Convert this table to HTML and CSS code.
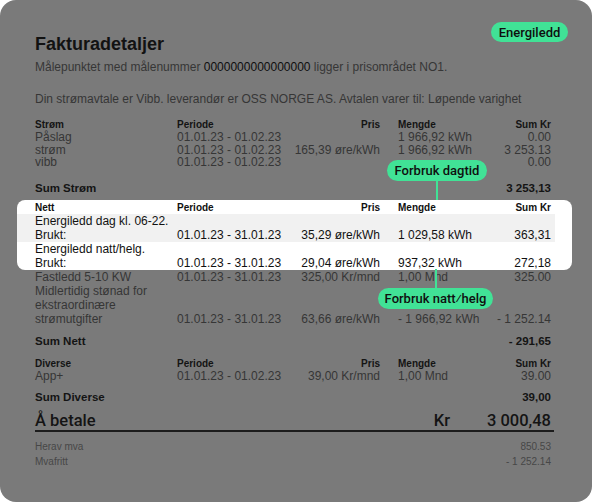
FILE: index.html
```html
<!DOCTYPE html>
<html lang="no">
<head>
<meta charset="utf-8">
<title>Fakturadetaljer</title>
<link rel="stylesheet" href="styles.css">
</head>
<body>
<div class="screen">
  <span class="tag tag-top">Energiledd</span>

  <div class="doc">
    <h1 class="title">Fakturadetaljer</h1>
    <p class="meta">Målepunktet med målenummer <b>0000000000000000</b> ligger i prisområdet NO1.</p>
    <p class="meta agreement">Din strømavtale er Vibb. leverandør er OSS NORGE AS. Avtalen varer til: Løpende varighet</p>

    <section class="group">
      <div class="row head"><span>Strøm</span><span>Periode</span><span class="r">Pris</span><span class="q">Mengde</span><span class="r">Sum Kr</span></div>
      <div class="row"><span>Påslag</span><span>01.01.23 - 01.02.23</span><span class="r"></span><span class="q">1 966,92 kWh</span><span class="r">0.00</span></div>
      <div class="row"><span>strøm</span><span>01.01.23 - 01.02.23</span><span class="r">165,39 øre/kWh</span><span class="q">1 966,92 kWh</span><span class="r">3 253.13</span></div>
      <div class="row"><span>vibb</span><span>01.01.23 - 01.02.23</span><span class="r"></span><span class="q"></span><span class="r">0.00</span></div>
      <div class="row sum"><span>Sum Strøm</span><span></span><span></span><span></span><span class="r">3 253,13</span></div>
    </section>

    <section class="card">
      <div class="row head"><span>Nett</span><span>Periode</span><span class="r">Pris</span><span class="q">Mengde</span><span class="r">Sum Kr</span></div>
      <div class="row item shaded"><span>Energiledd dag kl. 06-22.<br>Brukt:</span><span>01.01.23 - 31.01.23</span><span class="r">35,29 øre/kWh</span><span class="q">1 029,58 kWh</span><span class="r">363,31</span></div>
      <div class="row item"><span>Energiledd natt/helg.<br>Brukt:</span><span>01.01.23 - 31.01.23</span><span class="r">29,04 øre/kWh</span><span class="q">937,32 kWh</span><span class="r">272,18</span></div>
    </section>

    <section class="group after-card">
      <div class="row"><span>Fastledd 5-10 KW</span><span>01.01.23 - 31.01.23</span><span class="r">325,00 Kr/mnd</span><span class="q">1,00 Mnd</span><span class="r">325.00</span></div>
      <div class="row"><span class="wrap">Midlertidig stønad for ekstraordinære strømutgifter</span><span>01.01.23 - 31.01.23</span><span class="r">63,66 øre/kWh</span><span class="q">- 1 966,92 kWh</span><span class="r">- 1 252.14</span></div>
      <div class="row sum"><span>Sum Nett</span><span></span><span></span><span></span><span class="r">- 291,65</span></div>
    </section>

    <section class="group diverse">
      <div class="row head"><span>Diverse</span><span>Periode</span><span class="r">Pris</span><span class="q">Mengde</span><span class="r">Sum Kr</span></div>
      <div class="row"><span>App+</span><span>01.01.23 - 01.02.23</span><span class="r">39,00 Kr/mnd</span><span class="q">1,00 Mnd</span><span class="r">39.00</span></div>
      <div class="row sum"><span>Sum Diverse</span><span></span><span></span><span></span><span class="r">39,00</span></div>
    </section>

    <div class="total"><span class="total-label">Å betale</span><span class="total-cur">Kr</span><span class="total-val">3 000,48</span></div>

    <div class="vat">
      <div class="vat-row"><span>Herav mva</span><span>850.53</span></div>
      <div class="vat-row"><span>Mvafritt</span><span>- 1 252.14</span></div>
    </div>
  </div>

  <div class="callout callout-day">
    <span class="tag">Forbruk dagtid</span>
    <span class="stem"></span>
  </div>
  <div class="callout callout-night">
    <span class="stem"></span>
    <span class="tag">Forbruk natt⁄helg</span>
  </div>
</div>
</body>
</html>
```

FILE: styles.css
```css
html, body {
  margin: 0;
  padding: 0;
  background: #ffffff;
}

.screen {
  position: relative;
  width: 592px;
  height: 502px;
  background: #7a7a7a;
  border-radius: 16px;
  overflow: hidden;
  font-family: "Liberation Sans", Arial, sans-serif;
  color: #363636;
}

.doc {
  padding: 33px 0 0 35px;
  width: 519px;
}

.title {
  margin: 0;
  font-size: 18px;
  line-height: 22px;
  font-weight: 700;
  color: #121212;
}

.meta {
  margin: 5px 0 0;
  font-size: 12px;
  line-height: 14px;
}

.meta b {
  font-weight: 400;
  color: #0e0e0e;
}

.meta.agreement {
  margin-top: 18px;
}

.group {
  margin-top: 12px;
}

.row {
  display: grid;
  grid-template-columns: 142px 113px 90px 100px 71px;
  padding-right: 3px;
  font-size: 12px;
  line-height: 12.6px;
  white-space: nowrap;
}

.row .wrap {
  white-space: normal;
}

.row .r {
  text-align: right;
}

.row .q {
  padding-left: 18px;
}

.row.head {
  font-size: 10px;
  font-weight: 700;
  color: #141414;
  line-height: 13px;
}

.row.sum {
  margin-top: 12px;
  font-size: 11.5px;
  font-weight: 700;
  line-height: 14px;
  color: #141414;
}

.card {
  margin: 5px -18px 0;
  padding: 1px 18px 0;
  background: #ffffff;
  border-radius: 8px;
  color: #111111;
}

.card .row.head {
  color: #111111;
}

.card .row.item {
  line-height: 14px;
  align-items: end;
}

.card .row.shaded {
  background: #f1f1f1;
  margin: 0 -1px 0 -18px;
  padding-left: 18px;
  padding-right: 4px;
}

.group.after-card {
  margin-top: 0;
}

.group.after-card .row {
  line-height: 14px;
  align-items: end;
}

.group.after-card .row.sum {
  margin-top: 8px;
  line-height: 14px;
}

.group.diverse {
  margin-top: 9px;
}

.group.diverse .row.sum {
  margin-top: 8px;
}

.total {
  display: flex;
  align-items: baseline;
  padding-right: 3px;
  margin-top: 7px;
  font-family: Roboto, "Liberation Sans", sans-serif;
  font-weight: 500;
  font-size: 16.5px;
  line-height: 19px;
  color: #141414;
  border-bottom: 2px solid #1c1c1c;
  white-space: nowrap;
}

.total-label {
  flex: 1;
}

.total-val {
  width: 101px;
  text-align: right;
}

.vat {
  margin-top: 7px;
  font-size: 10px;
  line-height: 15px;
  color: #474747;
}

.vat-row {
  display: flex;
  justify-content: space-between;
  padding-right: 3px;
}

.tag {
  display: inline-flex;
  align-items: center;
  justify-content: center;
  height: 20px;
  padding: 0 10px;
  border-radius: 10px;
  background: #41e296;
  color: #0f0f0f;
  font-family: Roboto, "Liberation Sans", sans-serif;
  font-weight: 500;
  font-size: 13px;
  white-space: nowrap;
}

.tag-top {
  position: absolute;
  top: 22px;
  left: 491px;
  width: 77px;
  padding: 0;
}

.callout {
  position: absolute;
  display: flex;
  flex-direction: column;
  align-items: center;
}

.callout .tag {
  height: 21px;
  border-radius: 11px;
}

.stem {
  width: 2px;
  height: 19px;
  background: #41e296;
}

.callout-day {
  top: 160px;
  left: 387px;
  width: 100px;
}

.callout-day .tag {
  width: 100px;
  padding: 0;
}

.callout-night {
  top: 269px;
  left: 378px;
  width: 115px;
}

.callout-night .tag {
  width: 115px;
  padding: 0;
}
```
